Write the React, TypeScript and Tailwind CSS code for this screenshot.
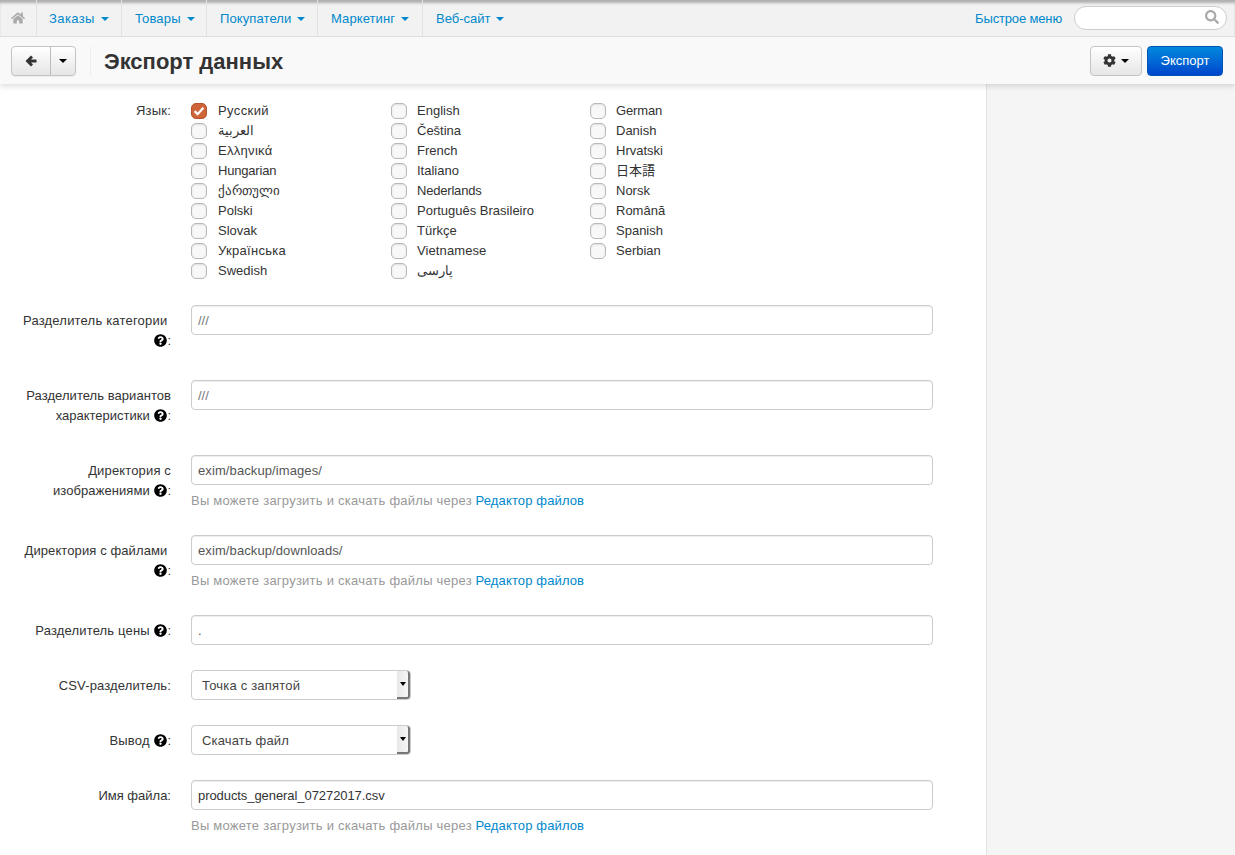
import React from "react";
import { FaHome, FaCog, FaSearch, FaQuestionCircle } from "react-icons/fa";

const langs = [
  ["Русский", "English", "German"],
  ["العربية", "Čeština", "Danish"],
  ["Ελληνικά", "French", "Hrvatski"],
  ["Hungarian", "Italiano", "日本語"],
  ["ქართული", "Nederlands", "Norsk"],
  ["Polski", "Português Brasileiro", "Română"],
  ["Slovak", "Türkçe", "Spanish"],
  ["Українська", "Vietnamese", "Serbian"],
  ["Swedish", "پارسی", ""],
];

const langTracking: Record<string, string> = {
  "Русский": "tracking-[0.4px]",
  "Українська": "tracking-[0.3px]",
  "Ελληνικά": "tracking-[0.3px]",
  "Hungarian": "tracking-[-0.2px]",
  "Nederlands": "tracking-[-0.2px]",
  "German": "tracking-[-0.15px]",
  "Vietnamese": "tracking-[0.1px]",
};

const nav = [
  { label: "Заказы", box: "w-[85px] pl-3", track: "tracking-[0.4px]" },
  { label: "Товары", box: "w-[85px] pl-[13px]", track: "tracking-[0.15px]" },
  { label: "Покупатели", box: "w-[111px] pl-[13px]", track: "tracking-[0.1px]" },
  { label: "Маркетинг", box: "w-[105px] pl-[13px]", track: "tracking-[0.1px]" },
  { label: "Веб-сайт", box: "w-auto pl-[13px] border-r-0", track: "" },
];

function Caret({ color = "border-t-[#0088cc]" }: { color?: string }) {
  return <span className={`inline-block w-0 h-0 border-l-4 border-r-4 border-t-4 border-l-transparent border-r-transparent ${color}`} />;
}

function Help() {
  return <FaQuestionCircle className="inline-block text-[13px] text-black align-[-2px] ml-[1px]" />;
}

function Check({ checked }: { checked?: boolean }) {
  return checked ? (
    <span className="w-4 h-4 rounded-[5px] bg-[#cf6439] border border-[#b5532c] flex items-center justify-center shrink-0">
      <svg viewBox="0 0 16 16" className="w-[14px] h-[14px]">
        <path d="M3 8.2 L6.4 11.6 L13 4.4" fill="none" stroke="#fff" strokeWidth="2.6" />
      </svg>
    </span>
  ) : (
    <span className="w-4 h-4 rounded-[5px] bg-[#f8f8f8] border border-[#b8b8b8] shadow-[inset_0_1px_2px_rgba(0,0,0,0.1)] shrink-0" />
  );
}

function Row({ label, children }: { label: React.ReactNode; children: React.ReactNode }) {
  return (
    <div className="flex">
      <div className="w-[171px] shrink-0 text-right pt-[6px] pb-1 pl-5">{label}</div>
      <div className="ml-5 w-[742px]">{children}</div>
    </div>
  );
}

function Field({ value, tone = "text-[#555555]", track = "" }: { value: string; tone?: string; track?: string }) {
  return (
    <div className={`h-[30px] w-full rounded-[4px] border border-[#cccccc] bg-white px-[6px] leading-[30px] shadow-[inset_0_1px_1px_rgba(0,0,0,0.075)] ${tone} ${track}`}>
      {value}
    </div>
  );
}

function Note() {
  return (
    <div className="mt-[6px] -mb-px text-[#999999]">
      <span className="tracking-[0.24px]">Вы можете загрузить и скачать файлы через</span>{" "}
      <span className="text-[#0088cc] tracking-[0.13px]">Редактор файлов</span>
    </div>
  );
}

function Select({ value, track }: { value: string; track: string }) {
  return (
    <div className={`relative h-[30px] w-[220px] rounded-[4px] border border-[#cccccc] bg-white pl-[10px] leading-[30px] text-[#444444] ${track}`}>
      {value}
      <span className="absolute right-0 top-0 bottom-0 w-[13px] flex items-center justify-center rounded-r-[3px] bg-gradient-to-r from-[#e8e8e8] to-[#f6f6f6] border-r-2 border-b-2 border-r-[#777777] border-b-[#777777]">
        <span className="w-0 h-0 border-l-[3px] border-r-[3px] border-t-[4px] border-l-transparent border-r-transparent border-t-black" />
      </span>
    </div>
  );
}

export default function App() {
  return (
    <div className="h-[855px] w-[1235px] overflow-hidden flex flex-col bg-white text-[13px] leading-5 text-[#333333] font-['Liberation_Sans','Noto_Sans_CJK_JP',sans-serif]">
      <div className="relative z-20 h-[37px] shrink-0 flex items-stretch bg-[#f2f2f2] border-b border-[#dcdcdc] shadow-[inset_0_4px_3px_-1px_rgba(0,0,0,0.28)]">
        <div className="w-[37px] flex items-center justify-center border-r border-[#e2e2e2] text-[#aaaaaa]">
          <FaHome className="text-[14px]" />
        </div>
        {nav.map((n) => (
          <div key={n.label} className={`flex items-center gap-[6px] border-r border-[#e2e2e2] text-[#0088cc] pt-px ${n.box}`}>
            <span className={n.track}>{n.label}</span>
            <Caret />
          </div>
        ))}
        <div className="ml-auto flex items-center pr-[8px]">
          <span className="text-[#0088cc] mr-3 pt-px tracking-[-0.15px]">Быстрое меню</span>
          <div className="relative h-[24px] w-[153px] rounded-full border border-[#cccccc] bg-white">
            <FaSearch className="absolute right-[7px] top-[3px] text-[14px] text-[#aaaaaa]" />
          </div>
        </div>
      </div>

      <div className="relative z-10 h-[47px] shrink-0 flex items-center bg-[#f9f9f9] shadow-[0_2px_6px_rgba(0,0,0,0.15)] pl-[11px] pr-3">
        <div className="flex h-[30px] rounded-[4px] border border-[#c4c4c4] bg-gradient-to-b from-white to-[#e6e6e6] shadow-[0_1px_1px_rgba(0,0,0,0.05)]">
          <div className="w-[39px] flex items-center justify-center border-r border-[#bbbbbb] text-[#333333]">
            <svg viewBox="0 0 12 12" className="w-3 h-3" fill="currentColor">
              <path d="M6 0.5 L0.5 6 L6 11.5 L8 9.5 L6 7.5 H11.5 V4.5 H6 L8 2.5 Z" />
            </svg>
          </div>
          <div className="w-[24px] flex items-center justify-center">
            <Caret color="border-t-black" />
          </div>
        </div>
        <div className="ml-[14px] h-[30px] border-l border-[#eeeeee]" />
        <h1 className="ml-[13px] pt-[2px] text-[22px] leading-[30px] font-bold text-[#333333]">Экспорт данных</h1>
        <div className="ml-auto flex items-center gap-[5px]">
          <div className="flex h-[30px] w-[52px] items-center justify-center gap-[5px] rounded-[4px] border border-[#c4c4c4] bg-gradient-to-b from-white to-[#e6e6e6]">
            <FaCog className="text-[13px] text-[#333333]" />
            <Caret color="border-t-black" />
          </div>
          <div className="flex h-[30px] w-[76px] items-center justify-center rounded-[4px] border border-[#0055b3] bg-gradient-to-b from-[#0088dd] to-[#0044cc] pt-px text-white">
            Экспорт
          </div>
        </div>
      </div>

      <div className="flex flex-1 min-h-0">
        <div className="w-[986px] shrink-0 pt-[17px] flex flex-col gap-[25px]">
          <div className="flex -mb-px">
            <div className="w-[171px] shrink-0 text-right tracking-[0.2px]">Язык:</div>
            <div className="ml-5 grid grid-cols-[200px_199px_200px] auto-rows-[20px]">
              {langs.flat().map((l, i) =>
                l ? (
                  <div key={i} className={`flex items-center ${i % 3 === 0 ? "gap-[11px]" : "gap-[10px]"}`}>
                    <Check checked={i === 0} />
                    <span className={langTracking[l] ?? ""}>{l}</span>
                  </div>
                ) : (
                  <div key={i} />
                )
              )}
            </div>
          </div>
          <Row label={<><span className="tracking-[0.2px]">Разделитель категории</span>&nbsp;<wbr /><Help />:</>}>
            <Field value="///" tone="text-[#777777]" />
          </Row>
          <Row label={<><span className="tracking-[0.05px]">Разделитель вариантов</span> характеристики <Help />:</>}>
            <Field value="///" tone="text-[#777777]" />
          </Row>
          <Row label={<><span className="tracking-[0.15px]">Директория с</span> <span className="tracking-[0.07px]">изображениями</span> <Help />:</>}>
            <Field value="exim/backup/images/" track="tracking-[0.1px]" />
            <Note />
          </Row>
          <Row label={<><span className="tracking-[0.1px]">Директория с файлами</span>&nbsp;<wbr /><Help />:</>}>
            <Field value="exim/backup/downloads/" track="tracking-[0.1px]" />
            <Note />
          </Row>
          <Row label={<><span className="tracking-[0.16px]">Разделитель цены</span> <Help />:</>}>
            <Field value="." />
          </Row>
          <Row label={<span className="tracking-[0.13px]">CSV-разделитель:</span>}>
            <Select value="Точка с запятой" track="tracking-[0.2px]" />
          </Row>
          <Row label={<><span className="tracking-[0.2px]">Вывод</span> <Help />:</>}>
            <Select value="Скачать файл" track="tracking-[0.15px]" />
          </Row>
          <Row label="Имя файла:">
            <Field value="products_general_07272017.csv" tone="text-[#333333]" track="tracking-[-0.07px]" />
            <Note />
          </Row>
        </div>
        <div className="flex-1 bg-[#f5f5f5] border-l border-[#e3e3e3]" />
      </div>
    </div>
  );
}
